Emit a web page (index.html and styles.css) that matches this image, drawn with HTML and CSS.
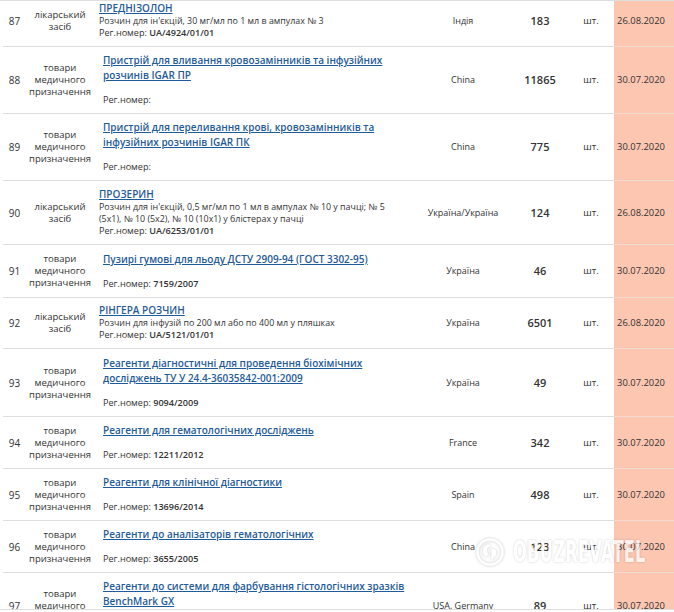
FILE: index.html
```html
<!DOCTYPE html>
<html lang="uk">
<head>
<meta charset="utf-8">
<title>Реєстр</title>
<link rel="stylesheet" href="styles.css">
</head>
<body>
<div class="wrap">
<table class="grid">
<colgroup>
<col class="c-num"><col class="c-type"><col class="c-name"><col class="c-country"><col class="c-qty"><col class="c-unit"><col class="c-date">
</colgroup>
<tbody>
<tr>
<td class="num">87</td>
<td class="type">лікарський<br>засіб</td>
<td class="name drug"><a class="t1" href="#">ПРЕДНІЗОЛОН</a><div class="desc">Розчин для ін'єкцій, 30 мг/мл по 1 мл в ампулах № 3</div><div class="reg">Рег.номер: <b>UA/4924/01/01</b></div></td>
<td class="country">Індія</td>
<td class="qty">183</td>
<td class="unit">шт.</td>
<td class="date">26.08.2020</td>
</tr>
<tr>
<td class="num">88</td>
<td class="type">товари<br>медичного<br>призначення</td>
<td class="name med"><a class="t2" href="#">Пристрій для вливання кровозамінників та інфузійних<br>розчинів IGAR ПР</a><div class="reg gap">Рег.номер:</div></td>
<td class="country">China</td>
<td class="qty">11865</td>
<td class="unit">шт.</td>
<td class="date">30.07.2020</td>
</tr>
<tr>
<td class="num">89</td>
<td class="type">товари<br>медичного<br>призначення</td>
<td class="name med"><a class="t2" href="#">Пристрій для переливання крові, кровозамінників та<br>інфузійних розчинів IGAR ПК</a><div class="reg gap">Рег.номер:</div></td>
<td class="country">China</td>
<td class="qty">775</td>
<td class="unit">шт.</td>
<td class="date">30.07.2020</td>
</tr>
<tr>
<td class="num">90</td>
<td class="type">лікарський<br>засіб</td>
<td class="name drug tall"><a class="t1" href="#">ПРОЗЕРИН</a><div class="desc">Розчин для ін'єкцій, 0,5 мг/мл по 1 мл в ампулах № 10 у пачці; № 5<br>(5x1), № 10 (5x2), № 10 (10x1) у блістерах у пачці</div><div class="reg">Рег.номер: <b>UA/6253/01/01</b></div></td>
<td class="country">Україна/Україна</td>
<td class="qty">124</td>
<td class="unit">шт.</td>
<td class="date">26.08.2020</td>
</tr>
<tr>
<td class="num">91</td>
<td class="type">товари<br>медичного<br>призначення</td>
<td class="name med tall"><a class="t2" href="#">Пузирі гумові для льоду ДСТУ 2909-94 (ГОСТ 3302-95)</a><div class="reg gap">Рег.номер: <b>7159/2007</b></div></td>
<td class="country">Україна</td>
<td class="qty">46</td>
<td class="unit">шт.</td>
<td class="date">30.07.2020</td>
</tr>
<tr>
<td class="num">92</td>
<td class="type">лікарський<br>засіб</td>
<td class="name drug"><a class="t1" href="#">РІНГЕРА РОЗЧИН</a><div class="desc">Розчин для інфузій по 200 мл або по 400 мл у пляшках</div><div class="reg">Рег.номер: <b>UA/5121/01/01</b></div></td>
<td class="country">Україна</td>
<td class="qty">6501</td>
<td class="unit">шт.</td>
<td class="date">26.08.2020</td>
</tr>
<tr>
<td class="num">93</td>
<td class="type">товари<br>медичного<br>призначення</td>
<td class="name med tall"><a class="t2" href="#">Реагенти діагностичні для проведення біохімічних<br>досліджень ТУ У 24.4-36035842-001:2009</a><div class="reg gap">Рег.номер: <b>9094/2009</b></div></td>
<td class="country">Україна</td>
<td class="qty">49</td>
<td class="unit">шт.</td>
<td class="date">30.07.2020</td>
</tr>
<tr>
<td class="num">94</td>
<td class="type">товари<br>медичного<br>призначення</td>
<td class="name med"><a class="t2" href="#">Реагенти для гематологічних досліджень</a><div class="reg gap">Рег.номер: <b>12211/2012</b></div></td>
<td class="country">France</td>
<td class="qty">342</td>
<td class="unit">шт.</td>
<td class="date">30.07.2020</td>
</tr>
<tr>
<td class="num">95</td>
<td class="type">товари<br>медичного<br>призначення</td>
<td class="name med"><a class="t2" href="#">Реагенти для клінічної діагностики</a><div class="reg gap">Рег.номер: <b>13696/2014</b></div></td>
<td class="country">Spain</td>
<td class="qty">498</td>
<td class="unit">шт.</td>
<td class="date">30.07.2020</td>
</tr>
<tr>
<td class="num">96</td>
<td class="type">товари<br>медичного<br>призначення</td>
<td class="name med"><a class="t2" href="#">Реагенти до аналізаторів гематологічних</a><div class="reg gap">Рег.номер: <b>3655/2005</b></div></td>
<td class="country">China</td>
<td class="qty">123</td>
<td class="unit">шт.</td>
<td class="date">30.07.2020</td>
</tr>
<tr>
<td class="num">97</td>
<td class="type">товари<br>медичного<br>призначення</td>
<td class="name med"><a class="t2" href="#">Реагенти до системи для фарбування гістологічних зразків<br>BenchMark GX</a><div class="reg gap">Рег.номер:</div></td>
<td class="country">USA, Germany</td>
<td class="qty">89</td>
<td class="unit">шт.</td>
<td class="date">30.07.2020</td>
</tr>
</tbody>
</table>
</div>
<div class="watermark">
<svg class="wm-logo" width="30" height="30" viewBox="0 0 30 30">
<circle cx="15" cy="15" r="12.5" fill="none" stroke="#fff" stroke-width="2.6"/>
<path d="M9 9.5 C11 7.5 14 7 16 8 C15 10 12.5 10.5 12 12.5 C11.5 14.5 13.5 15.5 13 17.5 C12.5 19.5 10.5 20 9.5 19 C7.5 16.5 7.5 12 9 9.5 Z" fill="#fff"/>
<path d="M17.5 12 C19.5 11.5 21.5 13 21.5 15.5 C21.5 18.5 19 21.5 16 22 C15.5 20 17 18.5 16.5 16.5 C16 14.5 16 12.5 17.5 12 Z" fill="#fff"/>
</svg>
<span class="wm-text">OBUZREVATEL</span>
</div>
</body>
</html>
```
FILE: styles.css
```css
html, body {
  margin: 0;
  padding: 0;
  background: #fff;
}
body {
  font-family: "Open Sans", "Liberation Sans", sans-serif;
  color: #333;
  font-size: 10px;
  position: relative;
  width: 674px;
  height: 612px;
  overflow: hidden;
}
.wrap {
  height: 608px;
  overflow: hidden;
  border-top: 1px solid #dedede;
  border-bottom: 1px solid #dedede;
}
.grid {
  border-collapse: separate;
  border-spacing: 0;
  table-layout: fixed;
  width: 671px;
  margin: -5px 0 0 3px;
}
.c-num { width: 23px; }
.c-type { width: 68px; }
.c-name { width: 326px; }
.c-country { width: 86px; }
.c-qty { width: 68px; }
.c-unit { width: 40px; }
.c-date { width: 60px; }
.grid td {
  padding: 0;
  vertical-align: middle;
  border-bottom: 1px solid #dedede;
  line-height: 12px;
}
.num {
  text-align: center;
  font-size: 10px;
}
.type {
  text-align: center;
  font-size: 9.5px;
  line-height: 12.5px;
}
.name {
  padding: 6px 6px 7px 5px !important;
  white-space: nowrap;
}
.name.med {
  padding-left: 9px !important;
}
.name.tall {
  padding-top: 7px !important;
}
.t1, .t2 {
  color: #1f5b98;
  font-weight: 600;
  text-decoration: underline;
  font-size: 10px;
  display: block;
}
.t1 { line-height: 13px; }
.t2 { line-height: 15px; }
.desc, .reg {
  font-size: 8.9px;
  line-height: 12px;
}
.reg {
  font-size: 9.1px;
}
.reg b { font-weight: 600; }
.reg.gap { margin-top: 11px; }
.country {
  text-align: center;
  font-size: 9px;
}
.qty {
  text-align: center;
  font-size: 11px;
  font-weight: 600;
}
.unit {
  text-align: center;
  font-size: 9.5px;
  padding-right: 6px !important;
}
.date {
  background: #fcc6b1;
  text-align: center;
  padding-right: 6px !important;
  font-size: 9.4px;
  border-bottom-color: #f3dbd1 !important;
}
.watermark {
  position: absolute;
  left: 475px;
  top: 537px;
  display: flex;
  align-items: center;
  gap: 8px;
  opacity: 0.75;
  pointer-events: none;
}
.wm-logo {
  filter: drop-shadow(0 0 1.5px rgba(0,0,0,0.3));
}
.wm-text {
  font-family: "DejaVu Sans Condensed", "DejaVu Sans", sans-serif;
  font-weight: bold;
  font-size: 30px;
  line-height: 30px;
  color: #fff;
  letter-spacing: 0.5px;
  display: inline-block;
  transform: scaleX(0.6);
  transform-origin: left center;
  text-shadow: 0 0 3px rgba(0,0,0,0.28);
}
```
